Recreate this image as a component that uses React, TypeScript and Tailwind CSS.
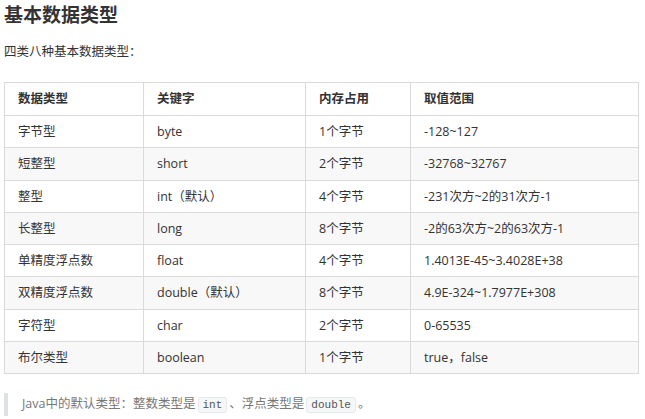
import React from 'react';

const rows = [
  ['字节型', 'byte', '1个字节', '-128~127'],
  ['短整型', 'short', '2个字节', '-32768~32767'],
  ['整型', 'int（默认）', '4个字节', '-231次方~2的31次方-1'],
  ['长整型', 'long', '8个字节', '-2的63次方~2的63次方-1'],
  ['单精度浮点数', 'float', '4个字节', '1.4013E-45~3.4028E+38'],
  ['双精度浮点数', 'double（默认）', '8个字节', '4.9E-324~1.7977E+308'],
  ['字符型', 'char', '2个字节', '0-65535'],
  ['布尔类型', 'boolean', '1个字节', 'true，false'],
];

const font = { fontFamily: '"Open Sans", "Noto Sans CJK SC", sans-serif' };

const Code = ({ children }: { children: React.ReactNode }) => (
  <code className="mx-[2px] rounded-[3px] border border-[#e7eaed] bg-[#f6f7f7] px-[4px] py-[1px] font-['Liberation_Mono',monospace] text-[11px] text-[#555]">
    {children}
  </code>
);

export default function App() {
  return (
    <div className="min-h-screen bg-white px-[4px] text-[#333]" style={font}>
      <h2 className="pt-[3px] text-[19px] font-bold leading-[24px] text-[#333]">基本数据类型</h2>
      <p className="mt-[15px] text-[12.5px] leading-[20px]">四类八种基本数据类型：</p>

      <table className="mt-[20px] w-[634px] table-fixed border-collapse text-[12.5px]">
        <colgroup>
          <col className="w-[139px]" />
          <col className="w-[162px]" />
          <col className="w-[105px]" />
          <col className="w-[228px]" />
        </colgroup>
        <thead>
          <tr className="bg-white">
            {['数据类型', '关键字', '内存占用', '取值范围'].map((h) => (
              <th key={h} className="border border-[#dadada] px-[13px] py-[6px] text-left font-bold leading-[20px]">
                {h}
              </th>
            ))}
          </tr>
        </thead>
        <tbody>
          {rows.map((r, i) => (
            <tr key={r[0]} className={i % 2 === 1 ? 'bg-[#f8f8f8]' : 'bg-white'}>
              {r.map((c, j) => (
                <td key={j} className="border border-[#dadada] px-[13px] py-[6px] leading-[19.3px]">
                  {c}
                </td>
              ))}
            </tr>
          ))}
        </tbody>
      </table>

      <blockquote className="mt-[19px] border-l-[4px] border-[#dfe2e5] pl-[14px] text-[12.5px] leading-[22px] text-[#777]">
        Java中的默认类型：整数类型是<Code>int</Code>、浮点类型是<Code>double</Code>。
      </blockquote>
    </div>
  );
}
